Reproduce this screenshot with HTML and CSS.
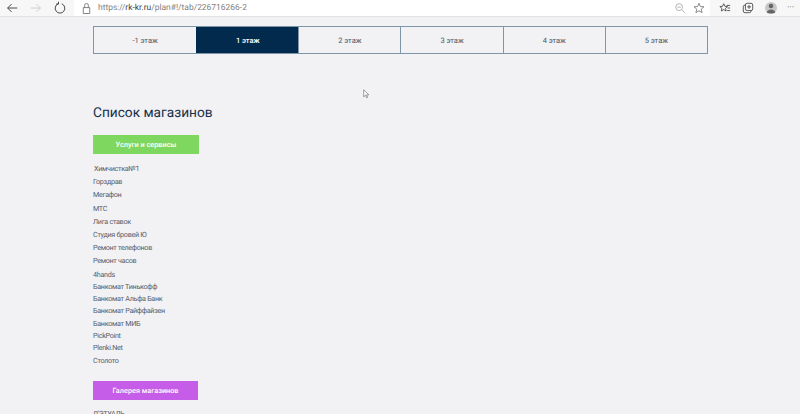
FILE: index.html
```html
<!DOCTYPE html>
<html lang="ru">
<head>
<meta charset="utf-8">
<title>Список магазинов</title>
<link rel="stylesheet" href="styles.css">
</head>
<body>
<header class="browser">
  <nav class="nav-buttons">
    <svg class="icon" viewBox="0 0 16 16"><path d="M14 8H3M7.5 3.5 3 8l4.500 4.500" fill="none" stroke="#444" stroke-width="1.100"/></svg>
    <svg class="icon" viewBox="0 0 16 16"><path d="M2 8h11M8.500 3.500 13 8l-4.500 4.500" fill="none" stroke="#ccc" stroke-width="1.100"/></svg>
    <svg class="icon" viewBox="0 0 16 16"><path d="M6 3.200A5.500 5.500 0 1 0 10 3.200M6.300 0.800 6.300 3.500 3.500 3.500" fill="none" stroke="#444" stroke-width="1.100"/></svg>
  </nav>
  <div class="address">
    <svg class="lock" viewBox="0 0 12 14"><path d="M2.500 6h7v6.500h-7zM4 6V3.500a2 2 0 0 1 4 0V6" fill="none" stroke="#777" stroke-width="1"/></svg>
    <span class="url">https://<b>rk-kr.ru</b>/plan#!/tab/226716266-2</span>
    <svg class="tool zoom-tool" viewBox="0 0 14 14"><circle cx="6" cy="6" r="4" fill="none" stroke="#aaa"/><path d="M9 9l4 4M4 6h4" stroke="#aaa"/></svg>
    <svg class="tool" viewBox="0 0 14 14"><path d="M7 1.500 8.600 5.300 12.800 5.600 9.600 8.300 10.600 12.400 7 10.200 3.400 12.400 4.400 8.300 1.200 5.600 5.400 5.300Z" fill="none" stroke="#777"/></svg>
  </div>
  <div class="toolbar">
    <svg class="tool" viewBox="0 0 14 14"><path d="M5.500 2 6.900 5 10 5.300 7.600 7.400 8.300 10.500 5.500 8.900 2.700 10.500 3.400 7.400 1 5.300 4.100 5Z" fill="none" stroke="#444"/><path d="M9 4h4M10 7h3M9.500 10h3.500" stroke="#444"/></svg>
    <svg class="tool" viewBox="0 0 14 14"><rect x="1.500" y="3.500" width="9" height="9" rx="2" fill="none" stroke="#444"/><rect x="4" y="1.500" width="8.500" height="8.500" rx="2" fill="#f7f7f7" stroke="#444"/><path d="M8.200 3.500v4.500M6 5.700h4.500" stroke="#444"/></svg>
    <span class="avatar"><svg viewBox="0 0 12 12"><circle cx="6" cy="4" r="2.300" fill="#666"/><path d="M1.500 11.500a4.500 4 0 0 1 9 0z" fill="#666"/></svg></span>
    <span class="more">···</span>
  </div>
</header>
<main class="page">
  <div class="tabs">
    <a class="tab">-1 этаж</a>
    <a class="tab tab-active">1 этаж</a>
    <a class="tab">2 этаж</a>
    <a class="tab">3 этаж</a>
    <a class="tab">4 этаж</a>
    <a class="tab">5 этаж</a>
  </div>
  <h1 class="title">Список магазинов</h1>
  <a class="category category-green">Услуги и сервисы</a>
  <ul class="shops">
    <li class="first">Химчистка№1</li>
    <li>Горздрав</li>
    <li>Мегафон</li>
    <li>МТС</li>
    <li>Лига ставок</li>
    <li>Студия бровей Ю</li>
    <li>Ремонт телефонов</li>
    <li>Ремонт часов</li>
    <li>4hands</li>
  </ul>
  <ul class="shops shops-tight">
    <li>Банкомат Тинькофф</li>
    <li>Банкомат Альфа Банк</li>
    <li>Банкомат Райффайзен</li>
    <li>Банкомат МИБ</li>
    <li>PickPoint</li>
    <li>Plenki.Net</li>
    <li>Столото</li>
  </ul>
  <a class="category category-purple">Галерея магазинов</a>
  <ul class="shops shops-last">
    <li>Л'ЭТУАЛЬ</li>
  </ul>
</main>
<svg class="cursor" viewBox="0 0 10 14"><path d="M1 1v10l2.500-2.200 1.700 3.700 1.500-.7L5 8.200h3.300Z" fill="#fff" stroke="#555" stroke-width=".8"/></svg>
</body>
</html>
```

FILE: styles.css
```css
* { box-sizing: border-box; }
html, body { margin: 0; height: 414px; overflow: hidden; }
body {
  position: relative;
  background: #f2f1f4;
  color: #44505c;
  font-family: Roboto, "Open Sans", sans-serif;
  text-rendering: geometricPrecision;
}
.browser {
  display: flex;
  align-items: center;
  height: 17px;
  background: #f7f7f7;
  border-bottom: 1px solid #e2e2e2;
}
.nav-buttons {
  display: flex;
  align-items: center;
  gap: 10px;
  width: 74px;
  flex: none;
  padding-left: 5px;
}
.icon { width: 14px; height: 14px; flex: none; }
.address {
  display: flex;
  align-items: center;
  flex: none;
  width: 636px;
  height: 16px;
  padding: 0 5px 0 7px;
  background: #fff;
  gap: 6px;
}
.lock { width: 11px; height: 13px; flex: none; }
.url {
  flex: 1;
  font: 8.450px Roboto, sans-serif;
  color: #808080;
  white-space: nowrap;
}
.url b { font-weight: 400; color: #444; }
.tool { width: 12px; height: 12px; flex: none; }
.zoom-tool { margin-right: 1px; }
.toolbar {
  display: flex;
  align-items: center;
  gap: 11px;
  padding-left: 9px;
  flex: 1;
  min-width: 0;
}
.avatar {
  display: flex;
  align-items: flex-end;
  justify-content: center;
  width: 12px;
  height: 12px;
  border-radius: 50%;
  background: #c8c8c8;
  overflow: hidden;
  flex: none;
}
.avatar svg { width: 12px; height: 12px; }
.more { font-size: 9px; color: #666; margin-left: -1px; white-space: nowrap; }
.page { padding: 9px 0 0 93px; }
.tabs {
  display: grid;
  grid-template-columns: repeat(6, 1fr);
  width: 615px;
  height: 28px;
  border: 1px solid #7f95a8;
}
.tab {
  display: flex;
  align-items: center;
  justify-content: center;
  font-size: 7.500px;
  color: #4a5866;
  border-left: 1px solid #7f95a8;
}
.tab:first-child { border-left: 0; }
.tab-active {
  background: #012a4c;
  border-left-color: #012a4c;
  color: #fff;
  font-weight: 500;
}
.title {
  margin: 48px 0 0;
  height: 22px;
  font-size: 13.700px;
  line-height: 22px;
  font-weight: 400;
  color: #14304a;
}
.category {
  display: flex;
  align-items: center;
  justify-content: center;
  height: 19px;
  color: #fff;
  font-size: 7.300px;
  font-weight: 500;
}
.category-green { width: 106px; margin-top: 11px; background: #7ed75f; }
.category-purple { width: 105px; margin-top: 14px; background: #c65de8; }
.shops {
  list-style: none;
  margin: 0;
  padding: 8px 0 0;
  font-size: 7.200px;
  letter-spacing: -.3px;
  line-height: 13.200px;
  color: #56606a;
}
.shops .first { padding-left: 1px; }
.shops-tight { padding: 0; line-height: 12.300px; }
.shops-last { padding-top: 7px; }
.cursor {
  position: absolute;
  left: 363px;
  top: 89px;
  width: 7px;
  height: 10px;
}
```
